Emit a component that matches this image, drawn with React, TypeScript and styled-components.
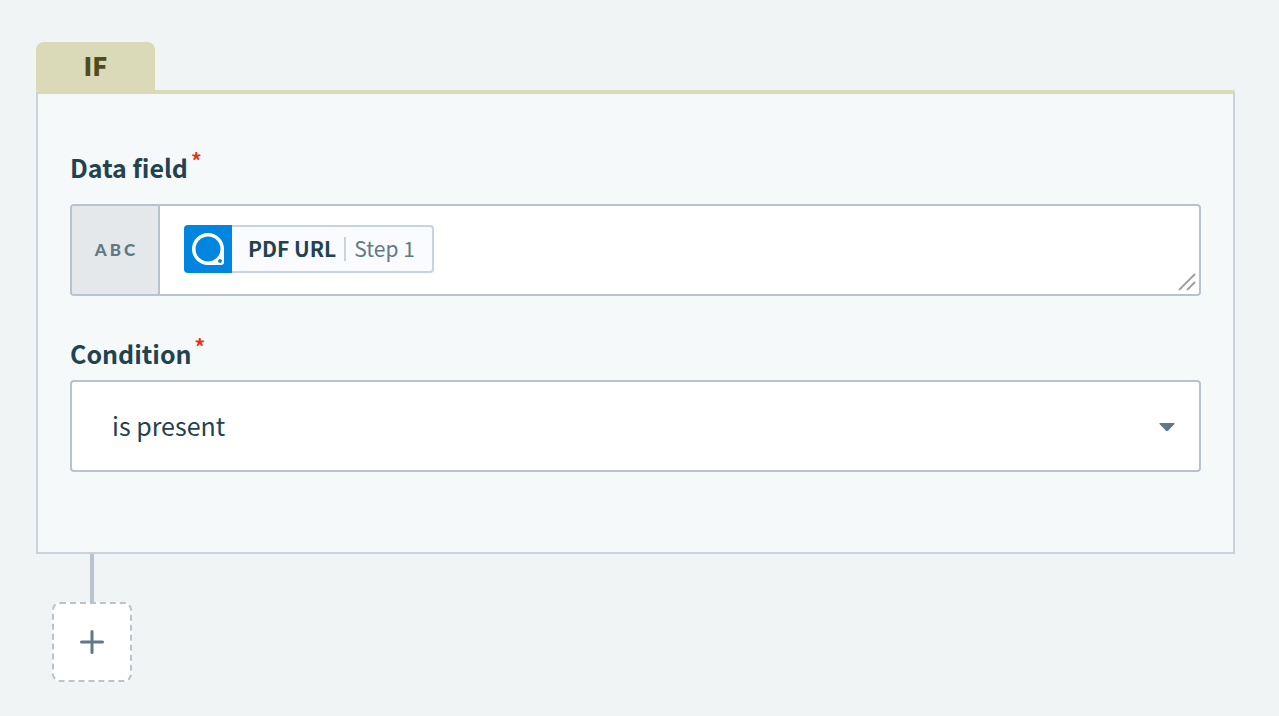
import React from "react";
import styled, { createGlobalStyle } from "styled-components";

const color = {
  page: "#f0f4f5",
  panel: "#f5f9fa",
  tab: "#dbdab8",
  tabText: "#4e4d20",
  text: "#23424f",
  muted: "#607888",
  line: "#b8c3cd",
  softLine: "#cad3da",
  required: "#e0351b",
  brand: "#0086e0",
};

const GlobalStyle = createGlobalStyle`
  *, *::before, *::after { box-sizing: border-box; }
  body {
    margin: 0;
    background: ${color.page};
    color: ${color.text};
    font-family: "Noto Sans CJK SC", "Noto Sans", sans-serif;
  }
  button, input, select { font: inherit; color: inherit; }
`;

const Page = styled.main`
  padding: 42px 44px 34px 36px;
`;

const Tab = styled.h2`
  width: 119px;
  height: 48px;
  margin: 0;
  background: ${color.tab};
  border-radius: 8px 8px 0 0;
  color: ${color.tabText};
  font-size: 25px;
  font-weight: 900;
  line-height: 46px;
  text-align: center;
`;

const Panel = styled.section`
  padding: 56px 32px 80px;
  background: ${color.panel};
  border: 2px solid ${color.softLine};
  border-top: 4px solid ${color.tab};
  border-radius: 2px 2px 0 0;
`;

const Field = styled.div<{ $gap: number }>`
  display: flex;
  flex-direction: column;
  gap: ${(p) => p.$gap}px;
  & + & {
    margin-top: 40px;
  }
`;

const Label = styled.label`
  display: flex;
  gap: 3px;
  font-size: 25px;
  font-weight: 700;
  line-height: 34px;
`;

const Required = styled.span`
  color: ${color.required};
  font-size: 21px;
  font-weight: 700;
  line-height: 20px;
`;

const DataBox = styled.div`
  position: relative;
  display: flex;
  height: 92px;
  background: #fff;
  border: 2px solid ${color.line};
  border-radius: 4px;
`;

const TypeBadge = styled.span`
  display: flex;
  align-items: center;
  justify-content: center;
  width: 88px;
  padding: 0 0 2px 3px;
  background: #e4e8eb;
  border-right: 2px solid ${color.line};
  border-radius: 2px 0 0 2px;
  color: ${color.muted};
  font-family: Lato, sans-serif;
  font-size: 17px;
  font-weight: 900;
  letter-spacing: 3px;
`;

const DataContent = styled.div`
  display: flex;
  flex: 1;
  align-items: flex-start;
  padding: 19px 24px;
`;

const Pill = styled.button`
  display: flex;
  flex: none;
  align-items: center;
  height: 48px;
  padding: 0;
  background: #f9fbfe;
  border: 0;
  border-radius: 4px;
  font-size: 21px;
  line-height: 22px;
`;

const PillBody = styled.span`
  display: flex;
  align-items: center;
  height: 48px;
  padding: 0 17px 0 16px;
  border: 2px solid ${color.softLine};
  border-left: 0;
  border-radius: 0 4px 4px 0;
`;

const PillName = styled.span`
  padding: 0 8px 2px 0;
  font-weight: 700;
`;

const PillStep = styled.span`
  padding: 0 0 2px 8px;
  border-left: 2px solid ${color.softLine};
  color: ${color.muted};
`;

const DataInput = styled.input`
  flex: 1;
  min-width: 0;
  height: 48px;
  padding: 0 8px;
  border: 0;
  outline: 0;
  background: transparent;
  font-size: 21px;
`;

const Grip = styled.svg`
  position: absolute;
  right: 3px;
  bottom: 3px;
`;

const SelectBox = styled.div`
  position: relative;
  display: flex;
`;

const Select = styled.select`
  flex: 1;
  height: 92px;
  padding: 0 64px 2px 40px;
  appearance: none;
  background: #fff;
  border: 2px solid ${color.line};
  border-radius: 4px;
  font-size: 25px;
`;

const Caret = styled.svg`
  position: absolute;
  right: 26px;
  top: 42px;
  pointer-events: none;
`;

const AddStep = styled.div`
  display: flex;
  flex-direction: column;
  align-items: center;
  width: 80px;
  margin-left: 16px;
`;

const Connector = styled.span`
  width: 4px;
  height: 48px;
  background: ${color.line};
`;

const AddButton = styled.button`
  display: flex;
  align-items: center;
  justify-content: center;
  width: 80px;
  height: 80px;
  padding: 0;
  background: #fff;
  border: 2px dashed ${color.line};
  border-radius: 8px;
`;

function AppLogo() {
  return (
    <svg width="48" height="48" viewBox="0 0 48 48" aria-hidden="true">
      <path d="M4 0H48V48H4a4 4 0 0 1-4-4V4a4 4 0 0 1 4-4Z" fill={color.brand} />
      <path
        d="M24 8a16 16 0 1 0 0 32H37a3 3 0 0 0 3-3V24A16 16 0 0 0 24 8Z"
        fill="#fff"
      />
      <circle cx="24" cy="24" r="12.5" fill={color.brand} />
      <path d="m35.2 34.4 2.400.800-.8 2.400-2.400-.8Z" fill={color.brand} stroke={color.brand} />
    </svg>
  );
}

export default function App() {
  return (
    <>
      <GlobalStyle />
      <Page>
        <Tab>IF</Tab>
        <Panel>
          <Field $gap={20}>
            <Label htmlFor="data-field">
              Data field <Required>*</Required>
            </Label>
            <DataBox>
              <TypeBadge>ABC</TypeBadge>
              <DataContent>
                <Pill type="button">
                  <AppLogo />
                  <PillBody>
                    <PillName>PDF URL</PillName>
                    <PillStep>Step 1</PillStep>
                  </PillBody>
                </Pill>
                <DataInput id="data-field" type="text" />
              </DataContent>
              <Grip width="18" height="18" viewBox="0 0 18 18" aria-hidden="true">
                <path d="M1 17 17 1M9 17l8-8" stroke="#a0a3a5" strokeWidth="2" fill="none" />
              </Grip>
            </DataBox>
          </Field>
          <Field $gap={10}>
            <Label htmlFor="condition">
              Condition <Required>*</Required>
            </Label>
            <SelectBox>
              <Select id="condition" defaultValue="present">
                <option value="present">is present</option>
                <option value="absent">is not present</option>
              </Select>
              <Caret width="16" height="10" viewBox="0 0 16 10" aria-hidden="true">
                <path d="M1 1H15Q16 1 15.500 2L9 8.800Q8 9.600 7 8.800L.5 2Q0 1 1 1Z" fill={color.muted} />
              </Caret>
            </SelectBox>
          </Field>
        </Panel>
        <AddStep>
          <Connector />
          <AddButton type="button" aria-label="Add step">
            <svg width="24" height="24" viewBox="0 0 24 24" aria-hidden="true">
              <path
                d="M12 1.500V22.500M1.500 12H22.500"
                stroke={color.muted}
                strokeWidth="3"
                strokeLinecap="round"
              />
            </svg>
          </AddButton>
        </AddStep>
      </Page>
    </>
  );
}
